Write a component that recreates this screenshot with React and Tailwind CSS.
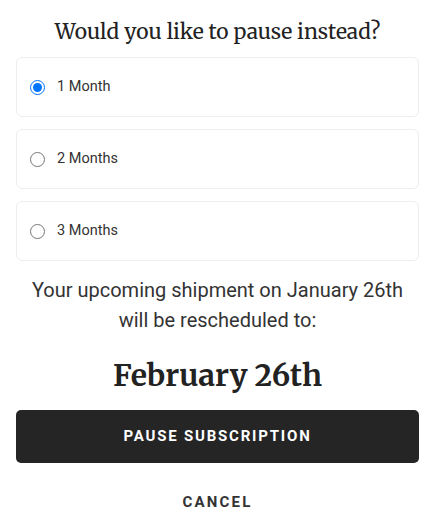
import { useState } from "react";

const options = [
  { value: 1, label: "1 Month" },
  { value: 2, label: "2 Months" },
  { value: 3, label: "3 Months" },
];

const serif = "font-['Merriweather','DejaVu_Serif',serif]";
const sans = "font-['Roboto','Liberation_Sans',sans-serif]";

const PauseOffer = () => {
  const [months, setMonths] = useState(1);

  return (
    <div className={`w-[435px] bg-white px-4 pt-[18px] text-[#333] ${sans}`}>
      <h2
        className={`text-center text-[21px] leading-[28px] text-[#222] ${serif}`}
      >
        Would you like to pause instead?
      </h2>

      <div className="mt-[11px] flex flex-col gap-3">
        {options.map((opt) => (
          <label
            key={opt.value}
            className="flex h-[60px] cursor-pointer items-center rounded-md border border-[#ededed] pl-[13px]"
          >
            <input
              type="radio"
              name="pause"
              checked={months === opt.value}
              onChange={() => setMonths(opt.value)}
              className="m-0 h-[15px] w-[15px] accent-[#0075ff]"
            />
            <span className="ml-[12px] text-[14.5px] text-[#333]">
              {opt.label}
            </span>
          </label>
        ))}
      </div>

      <p className="mt-[14px] text-center text-[20px] leading-[30px] text-[#333]">
        Your upcoming shipment on January 26th
        <br />
        will be rescheduled to:
      </p>

      <p
        className={`mt-[20px] text-center text-[30px] font-bold leading-[40px] text-[#222] ${serif}`}
      >
        February 26th
      </p>

      <button className="mt-[15px] flex h-[53px] w-full items-center justify-center rounded-[5px] bg-[#252525] text-[15px] font-bold tracking-[1.8px] text-white">
        PAUSE SUBSCRIPTION
      </button>

      <button className="mt-[28px] block w-full text-center text-[15px] font-bold tracking-[2.2px] text-[#333]">
        CANCEL
      </button>
    </div>
  );
};

export default function App() {
  return <PauseOffer />;
}
